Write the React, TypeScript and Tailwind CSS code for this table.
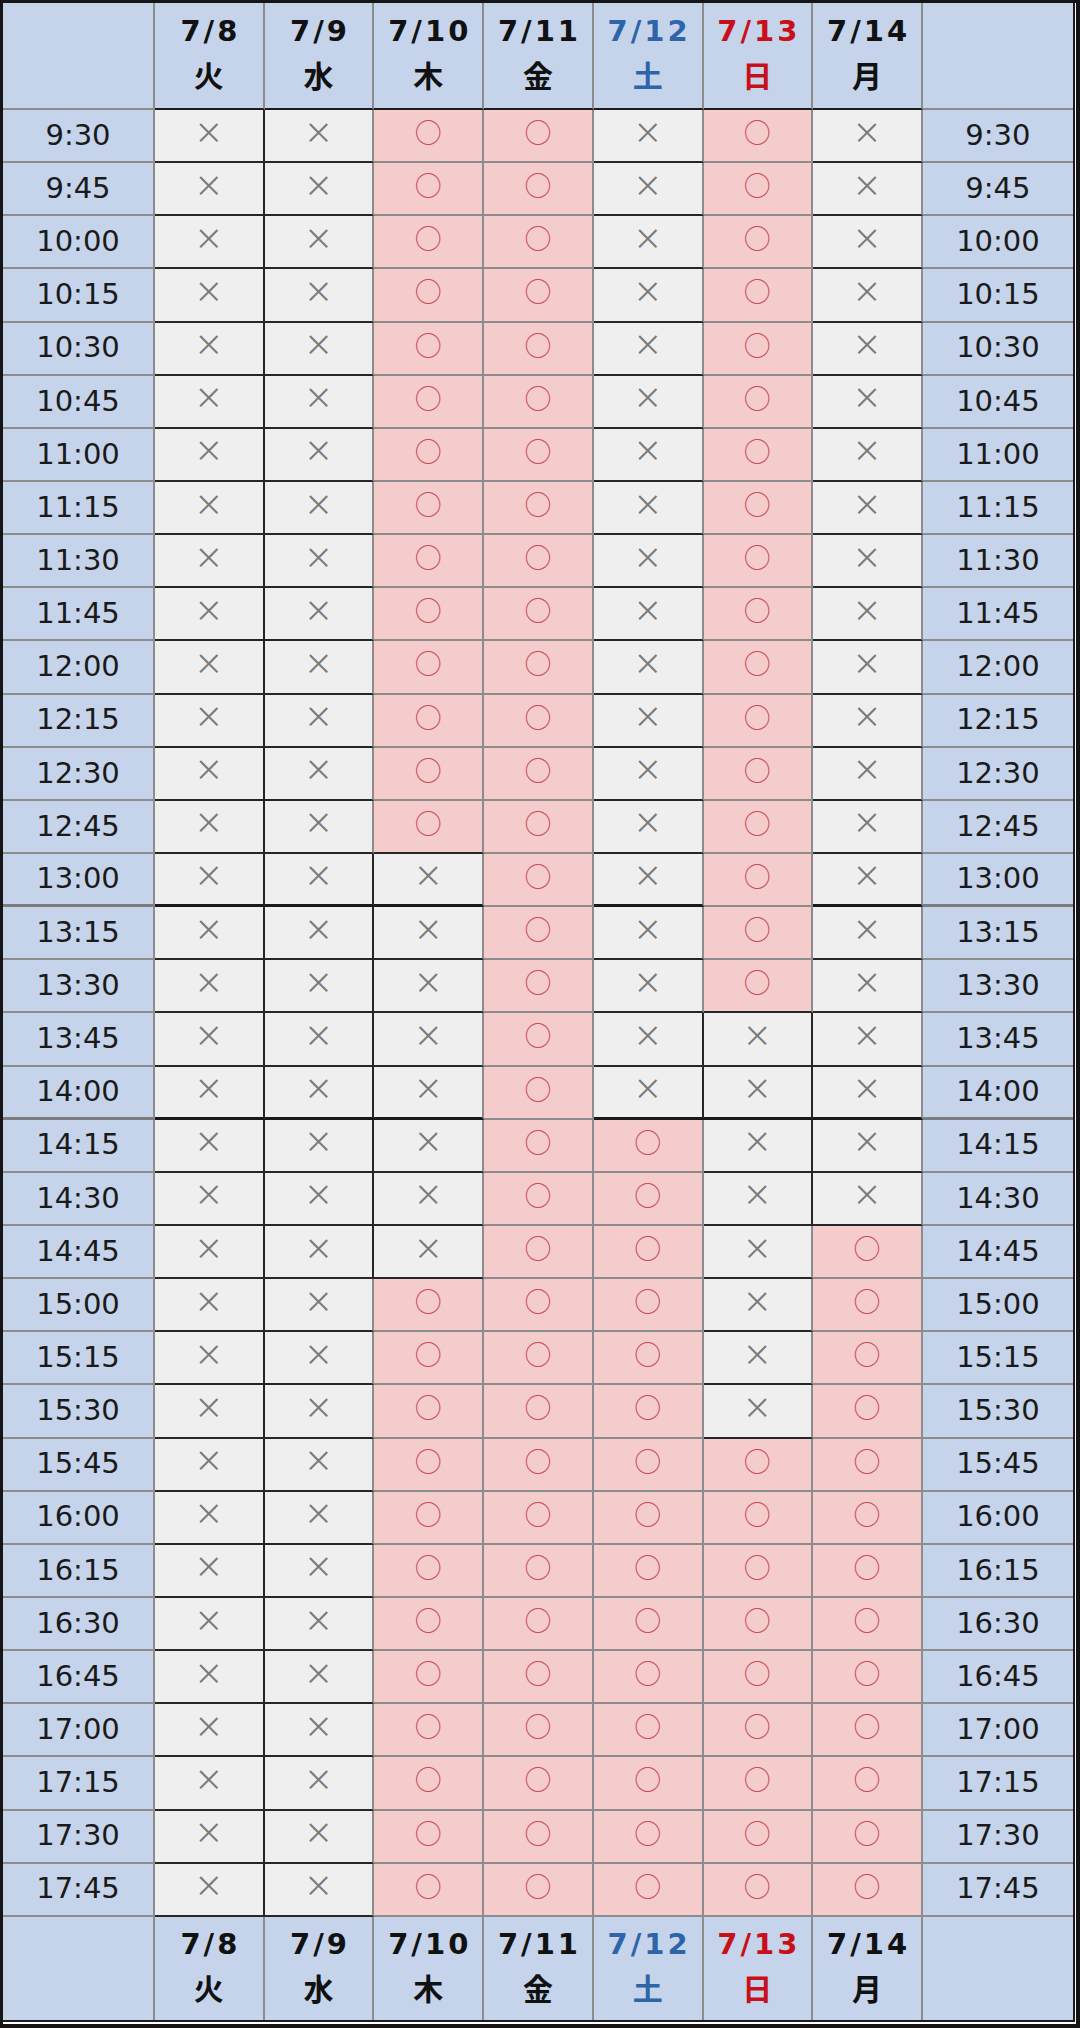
import React from 'react';

const DAYS = [
  { date: '7/8', wd: '火', color: 'text-[#111111]' },
  { date: '7/9', wd: '水', color: 'text-[#111111]' },
  { date: '7/10', wd: '木', color: 'text-[#111111]' },
  { date: '7/11', wd: '金', color: 'text-[#111111]' },
  { date: '7/12', wd: '土', color: 'text-[#2e64a8]' },
  { date: '7/13', wd: '日', color: 'text-[#c8101a]' },
  { date: '7/14', wd: '月', color: 'text-[#111111]' },
];

// rows (0 = 9:30) where each day is available, inclusive ranges
const OPEN: [number, number][][] = [
  [],
  [],
  [[0, 13], [22, 33]],
  [[0, 33]],
  [[19, 33]],
  [[0, 16], [25, 33]],
  [[21, 33]],
];

const TIMES = Array.from({ length: 34 }, (_, i) => {
  const m = 570 + i * 15;
  return `${Math.floor(m / 60)}:${String(m % 60).padStart(2, '0')}`;
});

const THICK_ROWS = [14, 18];

const isOpen = (r: number, c: number) => OPEN[c].some(([a, b]) => r >= a && r <= b);

function bottomCls(black: boolean, thick: boolean) {
  if (black) return thick ? 'border-b-[3px] border-b-[#1a1a1a]' : 'border-b-2 border-b-[#262626]';
  return thick ? 'border-b-[3px] border-b-[#7d7d7d]' : 'border-b-2 border-b-[#8c8c8c]';
}

function rightCls(black: boolean) {
  return black ? 'border-r-2 border-r-[#262626]' : 'border-r-2 border-r-[#8c8c8c]';
}

const TEXT_FONT = "font-['DejaVu_Sans','Noto_Sans_CJK_JP',sans-serif]";
const MARK_FONT = "font-['Noto_Sans_CJK_JP',sans-serif]";

function DayHeader({ top }: { top: boolean }) {
  return (
    <>
      <div
        className={
          'bg-[#c5d4ea] border-r-2 border-r-[#8c8c8c] ' +
          (top ? 'border-b-2 border-b-[#8c8c8c]' : '')
        }
      />
      {DAYS.map((d) => (
        <div
          key={d.date}
          className={
            'bg-[#c5d4ea] flex flex-col items-center border-r-2 border-r-[#8c8c8c] ' +
            (top ? 'pt-[8px] border-b-2 border-b-[#1c1c1c] ' : 'pt-[7px] ') +
            d.color
          }
        >
          <div className={`${TEXT_FONT} h-[40px] leading-[40px] text-[29px] font-bold tracking-[3px] pl-[3px]`}>
            {d.date}
          </div>
          <div className={`${TEXT_FONT} mt-[6px] h-[40px] leading-[40px] text-[30px] font-bold`}>{d.wd}</div>
        </div>
      ))}
      <div className={'bg-[#c5d4ea] ' + (top ? 'border-b-2 border-b-[#8c8c8c]' : '')} />
    </>
  );
}

function TimeCell({ r, last }: { r: number; last?: boolean }) {
  const thick = THICK_ROWS.includes(r);
  return (
    <div
      className={
        'bg-[#c5d4ea] flex items-center justify-center text-[29px] text-[#1a1a1a] ' +
        TEXT_FONT +
        ' ' +
        bottomCls(false, thick) +
        (last ? '' : ' border-r-2 border-r-[#8c8c8c]')
      }
    >
      {TIMES[r]}
    </div>
  );
}

function SlotCell({ r, c }: { r: number; c: number }) {
  const open = isOpen(r, c);
  const belowX = r < 33 ? !isOpen(r + 1, c) : false;
  const blackBottom = !open || belowX;
  const rightX = c < 6 ? !isOpen(r, c + 1) : false;
  const blackRight = !open && rightX;
  return (
    <div
      className={
        'flex items-center justify-center ' +
        (open ? 'pb-[8px] bg-[#f4cccc] ' : 'pb-[9px] bg-[#efefef] ') +
        bottomCls(blackBottom, blackBottom && THICK_ROWS.includes(r)) +
        ' ' +
        rightCls(blackRight)
      }
    >
      {open ? (
        <span className={`${MARK_FONT} text-[27px] leading-none text-[#cc4b5a]`}>○</span>
      ) : (
        <span className={`${MARK_FONT} text-[29px] leading-none text-[#7a7a7a]`}>×</span>
      )}
    </div>
  );
}

export default function App() {
  return (
    <div className="w-[1080px] h-[2028px] bg-white border-t-[3px] border-l-[3px] border-r-4 border-b-4 border-[#151515]">
      <div className="mr-[1px] mb-[2px] border-r-2 border-b-2 border-[#1c1c1c]">
        <div className="grid grid-cols-[152px_repeat(7,109.714px)_150px] grid-rows-[107px_repeat(34,53.147px)_103px]">
          <DayHeader top />
          {TIMES.map((t, r) => (
            <React.Fragment key={t}>
              <TimeCell r={r} />
              {DAYS.map((d, c) => (
                <SlotCell key={d.date} r={r} c={c} />
              ))}
              <TimeCell r={r} last />
            </React.Fragment>
          ))}
          <DayHeader top={false} />
        </div>
      </div>
    </div>
  );
}
